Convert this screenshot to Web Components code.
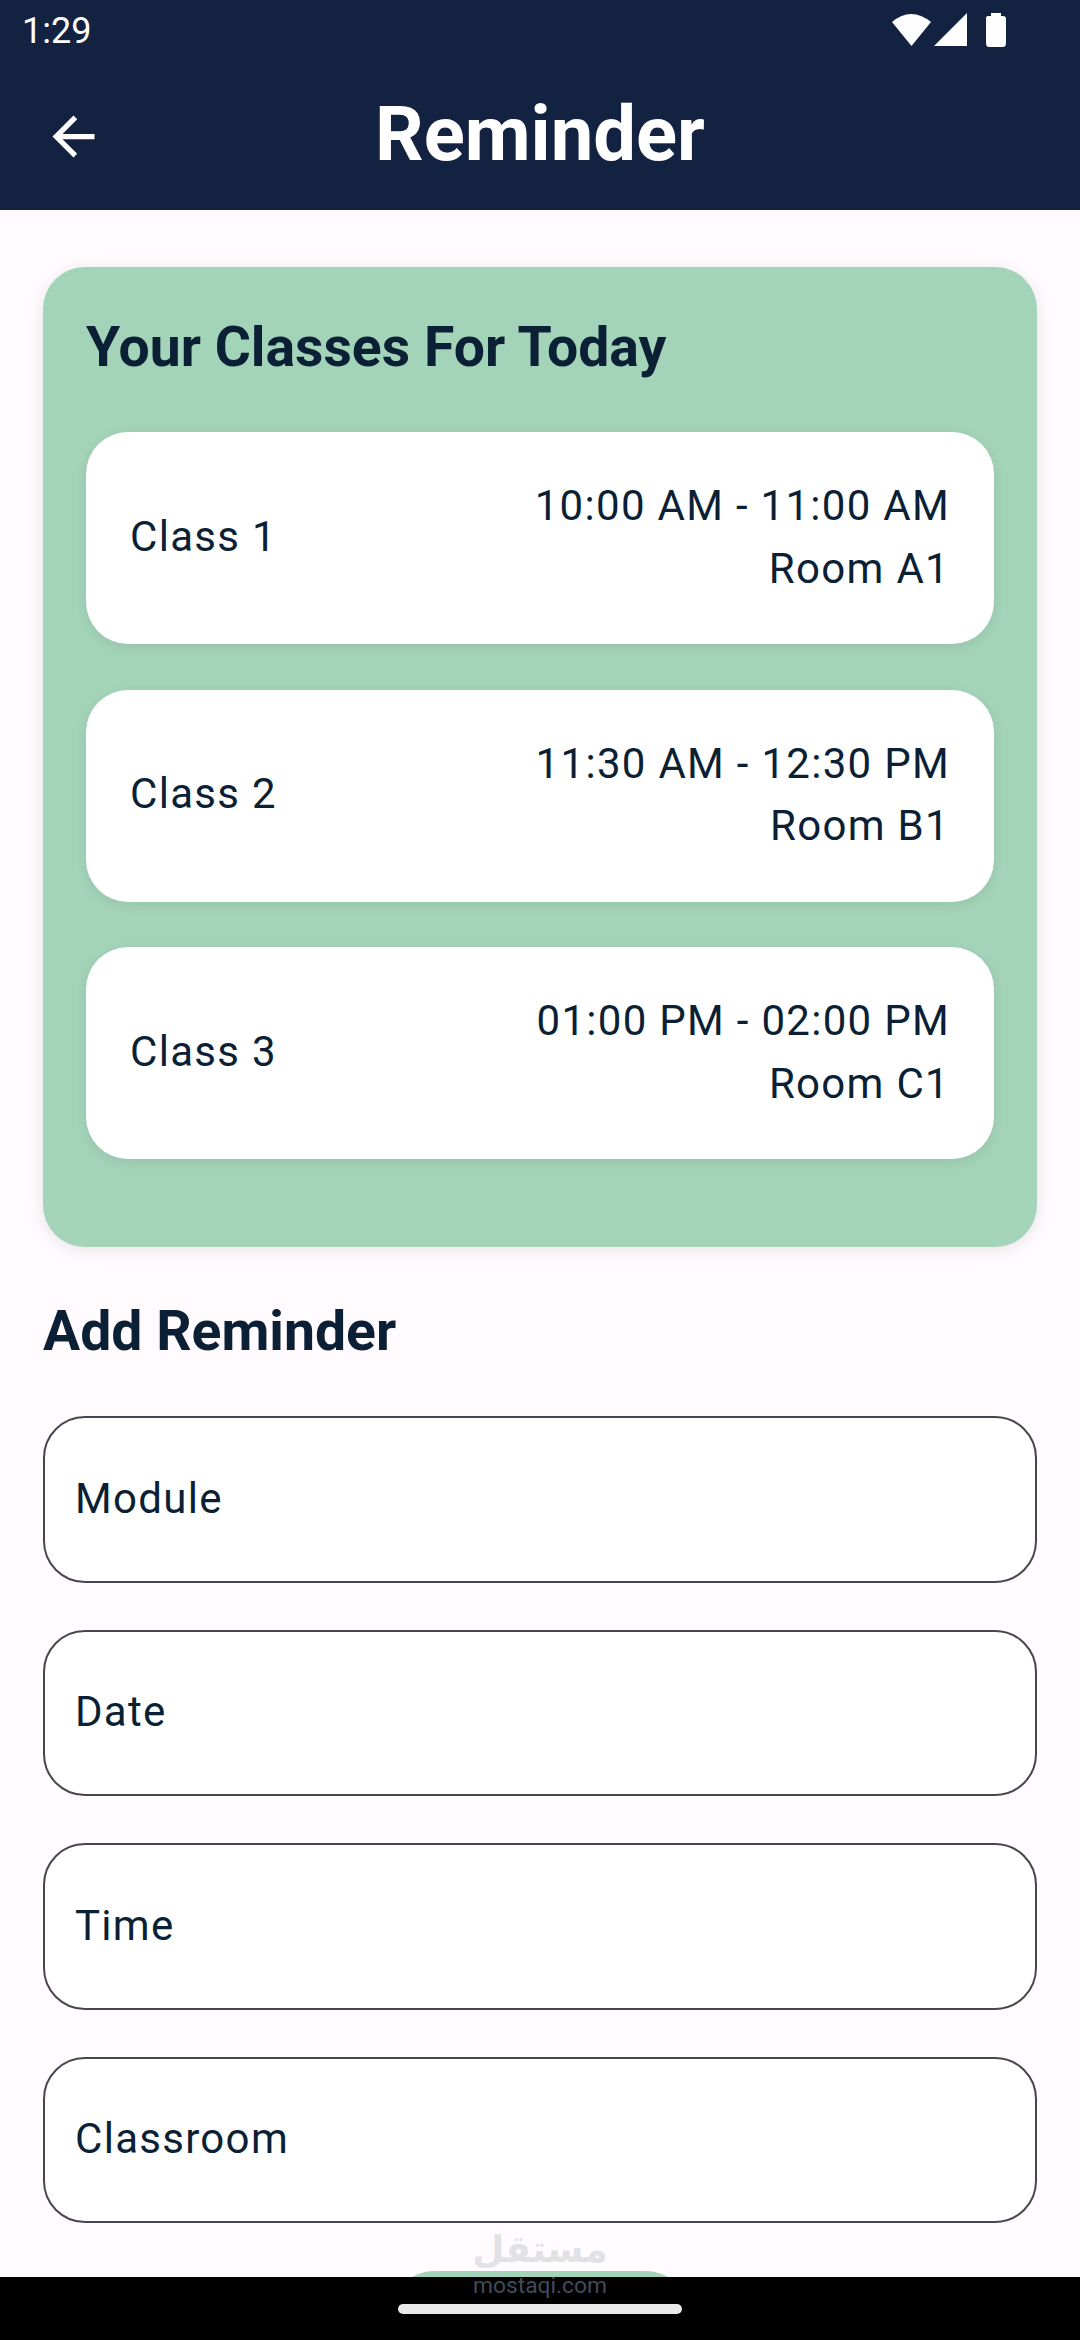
<!DOCTYPE html>
<html>
<head>
<meta charset="utf-8">
<style>
  html, body { margin: 0; padding: 0; }
  body { width: 1080px; height: 2340px; overflow: hidden; background: #fffbfe; font-family: Roboto, "Liberation Sans", sans-serif; color: #0b1f35; }
  reminder-page { height: 2340px; }
</style>
</head>
<body>
<reminder-page>
  <app-header slot="header" title="Reminder"></app-header>
  <classes-panel heading="Your Classes For Today">
    <class-row name="Class 1" time="10:00 AM - 11:00 AM" room="Room A1"></class-row>
    <class-row name="Class 2" time="11:30 AM - 12:30 PM" room="Room B1"></class-row>
    <class-row name="Class 3" time="01:00 PM - 02:00 PM" room="Room C1"></class-row>
  </classes-panel>
  <reminder-form heading="Add Reminder">
    <form-field label="Module"></form-field>
    <form-field label="Date"></form-field>
    <form-field label="Time"></form-field>
    <form-field label="Classroom"></form-field>
  </reminder-form>
</reminder-page>
<script>
// page shell: header, scrolling content, nav bar, watermark on top
class ReminderPage extends HTMLElement {
  constructor() {
    super();
    this._root = this.attachShadow({ mode: 'open' });
  }
  connectedCallback() {
    this._root.innerHTML = `
      <style>
        :host { display: flex; flex-direction: column; position: relative; width: 1080px; overflow: hidden; }
        main { flex: 1; min-height: 0; overflow: hidden; padding: 57px 43px 0; display: flex; flex-direction: column; }
        nav { flex: none; height: 63px; background: #000; display: flex; justify-content: center; align-items: flex-start; }
        .handle { width: 284px; height: 10px; border-radius: 5px; background: #e8e8e8; margin-top: 27px; }
        .mark { position: absolute; left: 0; right: 0; top: 2228px; text-align: center; pointer-events: none; }
        .ar { font-family: "DejaVu Sans", sans-serif; font-weight: 700; font-size: 37px; line-height: 44px; color: rgba(200,204,208,.55); direction: rtl; }
        .en { font-family: Roboto, sans-serif; font-weight: 400; font-size: 22.8px; line-height: 27px; color: rgba(90,100,125,.75); }
      </style>
      <slot name="header"></slot>
      <main><slot></slot></main>
      <nav><div class="handle"></div></nav>
      <div class="mark"><div class="ar">مستقل</div><div class="en">mostaqi.com</div></div>
    `;
  }
}

class AppHeader extends HTMLElement {
  constructor() {
    super();
    this._root = this.attachShadow({ mode: 'open' });
  }
  connectedCallback() {
    this._root.innerHTML = `
      <style>
        :host { display: block; background: #132240; color: #fff; height: 210px; flex: none; }
        .status { height: 63px; display: flex; align-items: center; justify-content: space-between; padding: 0 70px 0 22px; }
        .time { font-size: 36px; margin-top: -2px; }
        .icons { display: flex; align-items: center; margin-top: -3px; }
        .bar { height: 147px; display: grid; grid-template-columns: 147px 1fr 147px; align-items: center; }
        .bar svg { justify-self: center; }
        h1 { margin: 0 0 6px; text-align: center; font-size: 76px; font-weight: 700; line-height: 86px; }
      </style>
      <div class="status">
        <span class="time">1:29</span>
        <span class="icons">
          <svg width="120" height="36" viewBox="0 0 120 36">
            <path d="M2 10 Q21 -6 41 10 L21.5 34 Z" fill="#fff"/>
            <path d="M77 1 V34 H44 Z" fill="#fff"/>
            <path d="M96 6 Q96 4 98 4 H101 V1 H111 V4 H113 Q116 4 116 7 V31 Q116 35 113 35 H99 Q96 35 96 31 Z" fill="#fff"/>
          </svg>
        </span>
      </div>
      <div class="bar">
        <svg width="63" height="63" viewBox="0 0 24 24" style="margin-left:-1px"><path d="M20 11H7.83l5.59-5.59L12 4l-8 8 8 8 1.41-1.41L7.83 13H20v-2z" fill="#fff"/></svg>
        <h1>${this.getAttribute('title')}</h1>
        <span></span>
      </div>
    `;
  }
}

class ClassesPanel extends HTMLElement {
  constructor() {
    super();
    this._root = this.attachShadow({ mode: 'open' });
  }
  connectedCallback() {
    this._root.innerHTML = `
      <style>
        :host { display: block; background: #a3d3b9; border-radius: 42px; padding: 0 43px 88px; box-shadow: 0 3px 18px rgba(0,0,0,.1); flex: none; }
        h2 { margin: 0; padding: 49px 0 52px; font-size: 55.3px; line-height: 64px; font-weight: 700; color: #0b1f35; }
        .list { display: flex; flex-direction: column; gap: 45.5px; }
      </style>
      <h2>${this.getAttribute('heading')}</h2>
      <div class="list"><slot></slot></div>
    `;
  }
}

class ClassRow extends HTMLElement {
  constructor() {
    super();
    this._root = this.attachShadow({ mode: 'open' });
  }
  connectedCallback() {
    this._root.innerHTML = `
      <style>
        :host { display: flex; align-items: center; justify-content: space-between; height: 212px; box-sizing: border-box; padding: 0 44px; background: #fff; border-radius: 42px; box-shadow: 0 3px 12px rgba(0,0,0,.08); font-size: 42px; letter-spacing: 1.3px; color: #0b1f35; }
        .name { margin-top: -4px; }
        .info { text-align: right; line-height: 62.5px; margin-top: -1px; }
      </style>
      <span class="name">${this.getAttribute('name')}</span>
      <div class="info"><div>${this.getAttribute('time')}</div><div>${this.getAttribute('room')}</div></div>
    `;
  }
}

class ReminderForm extends HTMLElement {
  constructor() {
    super();
    this._root = this.attachShadow({ mode: 'open' });
  }
  connectedCallback() {
    this._root.innerHTML = `
      <style>
        :host { display: block; flex: none; }
        h2 { margin: 0; padding: 53px 0 52px; font-size: 55.3px; line-height: 64px; font-weight: 700; color: #0b1f35; }
        .fields { display: flex; flex-direction: column; gap: 47px; }
        .submit { width: 296px; height: 120px; margin: 48px auto 0; background: #a3d3b9; border-radius: 42px; }
      </style>
      <h2>${this.getAttribute('heading')}</h2>
      <div class="fields"><slot></slot></div>
      <div class="submit"></div>
    `;
  }
}

class FormField extends HTMLElement {
  constructor() {
    super();
    this._root = this.attachShadow({ mode: 'open' });
  }
  connectedCallback() {
    this._root.innerHTML = `
      <style>
        :host { display: flex; align-items: center; height: 166.5px; box-sizing: border-box; padding: 0 0 2px 30px; background: #fff; border: 2.6px solid #49454f; border-radius: 42px; font-size: 42px; letter-spacing: 1.3px; color: #0b1f35; }
      </style>
      <span>${this.getAttribute('label')}</span>
    `;
  }
}

window.customElements.define('reminder-page', ReminderPage);
window.customElements.define('app-header', AppHeader);
window.customElements.define('classes-panel', ClassesPanel);
window.customElements.define('class-row', ClassRow);
window.customElements.define('reminder-form', ReminderForm);
window.customElements.define('form-field', FormField);
</script>
</body>
</html>
